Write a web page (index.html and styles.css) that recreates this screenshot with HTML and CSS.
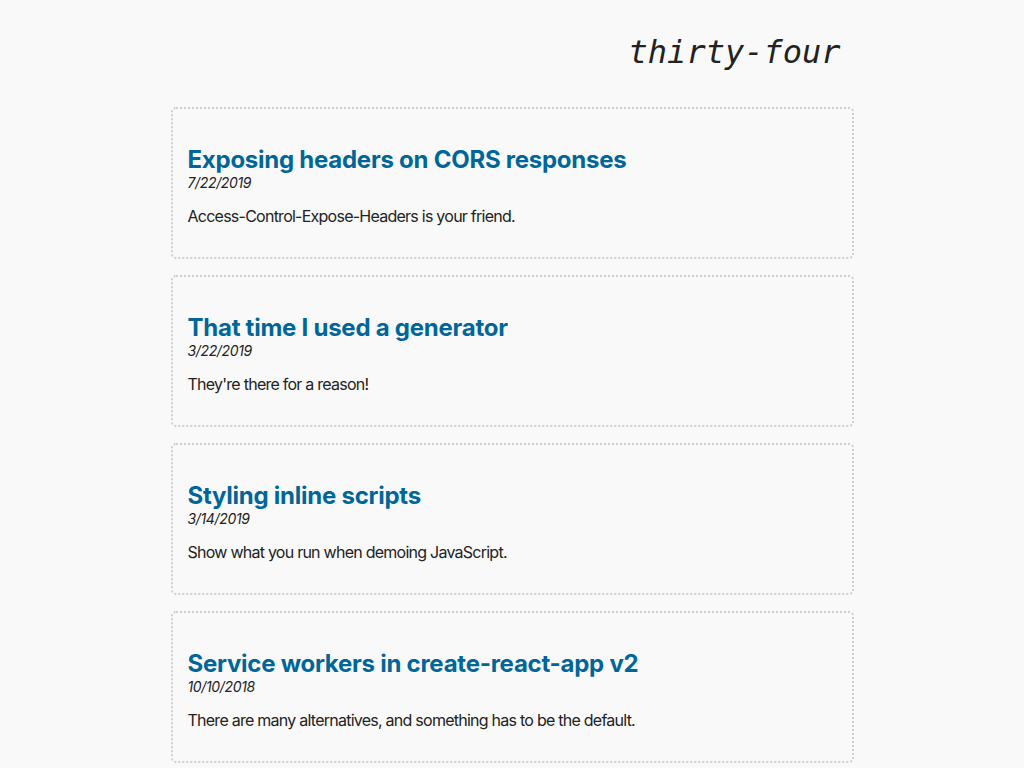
FILE: index.html
```html
<!DOCTYPE html>
<html lang="en">
<head>
<meta charset="utf-8">
<title>thirty-four</title>
<link rel="stylesheet" href="styles.css">
</head>
<body>
<div class="page">
  <header class="site-header">
    <h1 class="site-title">thirty-four</h1>
  </header>
  <main class="posts">
    <article class="post">
      <h2 class="post-title"><a href="#">Exposing headers on CORS responses</a></h2>
      <div class="post-date">7/22/2019</div>
      <p class="post-desc">Access-Control-Expose-Headers is your friend.</p>
    </article>
    <article class="post">
      <h2 class="post-title"><a href="#">That time I used a generator</a></h2>
      <div class="post-date">3/22/2019</div>
      <p class="post-desc">They're there for a reason!</p>
    </article>
    <article class="post">
      <h2 class="post-title"><a href="#">Styling inline scripts</a></h2>
      <div class="post-date">3/14/2019</div>
      <p class="post-desc">Show what you run when demoing JavaScript.</p>
    </article>
    <article class="post">
      <h2 class="post-title"><a href="#">Service workers in create-react-app v2</a></h2>
      <div class="post-date">10/10/2018</div>
      <p class="post-desc">There are many alternatives, and something has to be the default.</p>
    </article>
  </main>
</div>
</body>
</html>
```

FILE: styles.css
```css
html, body {
  margin: 0;
  padding: 0;
  background: #f9f9f9;
}
body {
  font-family: Inter, "Noto Sans", sans-serif;
  color: #222;
}
.page {
  width: 683px;
  margin: 0 auto;
}
.site-header {
  display: flex;
  justify-content: flex-end;
  padding: 30px 13px 0 0;
  height: 107px;
  box-sizing: border-box;
}
.site-title {
  margin: 0;
  font-family: "DejaVu Sans Mono", monospace;
  font-style: italic;
  font-weight: normal;
  font-size: 32px;
  line-height: 44px;
  color: #222;
}
.posts {
  display: flex;
  flex-direction: column;
  gap: 16px;
}
.post {
  border: 2px dotted #cfcfcf;
  border-radius: 5px;
  padding: 16px 16px 16px 15px;
  height: 152px;
  box-sizing: border-box;
}
.post-title {
  margin: 20px 0 0;
  font-size: 24px;
  font-weight: 700;
  line-height: 29px;
  letter-spacing: -0.25px;
}
.post-title a {
  color: #006699;
  text-decoration: none;
}
.post-date {
  font-size: 14px;
  font-style: italic;
  line-height: 17px;
  letter-spacing: -0.35px;
}
.post-desc {
  margin: 16px 0 0;
  font-size: 16px;
  line-height: 19px;
  letter-spacing: -0.75px;
}
```
